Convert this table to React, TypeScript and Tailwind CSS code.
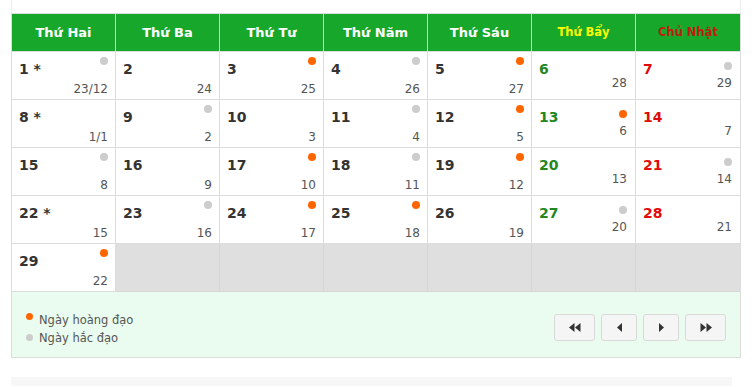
import React from "react";

type Dot = "o" | "g" | null;
type Day = { d: string; l: string; dot: Dot } | null;

const headers = ["Thứ Hai", "Thứ Ba", "Thứ Tư", "Thứ Năm", "Thứ Sáu", "Thứ Bẩy", "Chủ Nhật"];

const weeks: Day[][] = [
  [
    { d: "1 *", l: "23/12", dot: "g" },
    { d: "2", l: "24", dot: null },
    { d: "3", l: "25", dot: "o" },
    { d: "4", l: "26", dot: "g" },
    { d: "5", l: "27", dot: "o" },
    { d: "6", l: "28", dot: null },
    { d: "7", l: "29", dot: "g" },
  ],
  [
    { d: "8 *", l: "1/1", dot: null },
    { d: "9", l: "2", dot: "g" },
    { d: "10", l: "3", dot: null },
    { d: "11", l: "4", dot: "g" },
    { d: "12", l: "5", dot: "o" },
    { d: "13", l: "6", dot: "o" },
    { d: "14", l: "7", dot: null },
  ],
  [
    { d: "15", l: "8", dot: "g" },
    { d: "16", l: "9", dot: null },
    { d: "17", l: "10", dot: "o" },
    { d: "18", l: "11", dot: "g" },
    { d: "19", l: "12", dot: "o" },
    { d: "20", l: "13", dot: null },
    { d: "21", l: "14", dot: "g" },
  ],
  [
    { d: "22 *", l: "15", dot: null },
    { d: "23", l: "16", dot: "g" },
    { d: "24", l: "17", dot: "o" },
    { d: "25", l: "18", dot: "o" },
    { d: "26", l: "19", dot: null },
    { d: "27", l: "20", dot: "g" },
    { d: "28", l: "21", dot: null },
  ],
  [{ d: "29", l: "22", dot: "o" }, null, null, null, null, null, null],
];

function DotMark({ type, className = "" }: { type: Dot; className?: string }) {
  if (!type) return <span className={"h-[8px] w-[8px] " + className} />;
  return (
    <span
      className={
        "h-[8px] w-[8px] rounded-full " +
        (type === "o" ? "bg-[#ff6600] " : "bg-[#cccccc] ") +
        className
      }
    />
  );
}

function Cell({ day, col }: { day: Day; col: number }) {
  const edge = col === 6 ? "" : "border-r";
  if (!day) {
    return <div className={`h-[48px] border-b border-[#d6d6d6] bg-[#dfdfdf] ${edge}`} />;
  }
  const weekend = col >= 5;
  const color = col === 5 ? "text-[#23871f]" : col === 6 ? "text-[#e00b0b]" : "text-[#333333]";

  if (weekend) {
    return (
      <div className={`flex h-[48px] flex-col border-b border-[#dcdcdc] bg-white pl-[7px] pr-[8px] pt-[9px] ${edge}`}>
        <div className="flex items-start justify-between">
          <span className={`text-[14px] font-bold leading-[16px] ${color}`}>{day.d}</span>
          <DotMark type={day.dot} className="mt-px" />
        </div>
        <div className="-mt-px text-right text-[12px] leading-[14px] text-[#555555]">{day.l}</div>
      </div>
    );
  }

  return (
    <div className={`flex h-[48px] flex-col border-b border-[#dcdcdc] bg-white px-[7px] pt-[5px] ${edge}`}>
      <div className="flex items-start justify-between">
        <span className={`mt-[4px] text-[14px] font-bold leading-[16px] ${color}`}>{day.d}</span>
        <DotMark type={day.dot} />
      </div>
      <div className="mt-[5px] text-right text-[12px] leading-[14px] text-[#555555]">{day.l}</div>
    </div>
  );
}

function NavButton({ w, children }: { w: string; children: React.ReactNode }) {
  return (
    <button
      className={`flex h-[27px] items-center justify-center rounded-[3px] border border-[#d9d9d9] bg-[#f5f5f5] ${w}`}
    >
      {children}
    </button>
  );
}

export default function App() {
  return (
    <div className="min-h-screen bg-white pl-[11px] font-['DejaVu_Sans',sans-serif]">
      <div className="w-[730px]">
        <div className="h-[13px] border-x border-[#ececec]" />
        <div className="border border-[#dcdcdc]">
          <div className="grid grid-cols-[repeat(6,104px)_1fr]">
            {headers.map((h, i) => (
              <div
                key={h}
                className={`flex h-[38px] items-center justify-center border-b border-[#dcdcdc] bg-[#17a82b] font-bold ${
                  i === 6 ? "" : "border-r border-r-[#dfe8df]"
                } ${i === 5 ? "text-[11.5px] text-[#ffff00]" : i === 6 ? "text-[11.5px] text-[#bf1d10]" : "text-[13px] text-white"}`}
              >
                {h}
              </div>
            ))}
            {weeks.map((week, r) =>
              week.map((day, c) => <Cell key={`${r}-${c}`} day={day} col={c} />)
            )}
          </div>
          <div className="flex h-[65px] items-start justify-between bg-[#e9fcef] pl-[14px] pr-[14px] pt-[19px]">
            <div className="text-[11.5px] leading-[18px] text-[#555555]">
              <div className="flex items-start gap-[6px]">
                <span className="mt-[2px] h-[7px] w-[7px] rounded-full bg-[#ff6600]" />
                <span>Ngày hoàng đạo</span>
              </div>
              <div className="flex items-start gap-[6px]">
                <span className="mt-[5px] h-[7px] w-[7px] rounded-full bg-[#cccccc]" />
                <span>Ngày hắc đạo</span>
              </div>
            </div>
            <div className="mt-[3px] flex gap-[6px]">
              <NavButton w="w-[41px]">
                <svg width="12" height="9" viewBox="0 0 12 9">
                  <polygon points="5.5,0 0,4.5 5.5,9" fill="#333" />
                  <polygon points="11.5,0 6,4.5 11.5,9" fill="#333" />
                </svg>
              </NavButton>
              <NavButton w="w-[36px]">
                <svg width="5" height="9" viewBox="0 0 5 9">
                  <polygon points="5,0 0,4.5 5,9" fill="#333" />
                </svg>
              </NavButton>
              <NavButton w="w-[36px]">
                <svg width="5" height="9" viewBox="0 0 5 9">
                  <polygon points="0,0 5,4.5 0,9" fill="#333" />
                </svg>
              </NavButton>
              <NavButton w="w-[41px]">
                <svg width="12" height="9" viewBox="0 0 12 9">
                  <polygon points="0.5,0 6,4.5 0.5,9" fill="#333" />
                  <polygon points="6.5,0 12,4.5 6.5,9" fill="#333" />
                </svg>
              </NavButton>
            </div>
          </div>
        </div>
        <div className="mt-[19px] h-[9px] w-[721px] bg-[#f7f7f7]" />
      </div>
    </div>
  );
}
